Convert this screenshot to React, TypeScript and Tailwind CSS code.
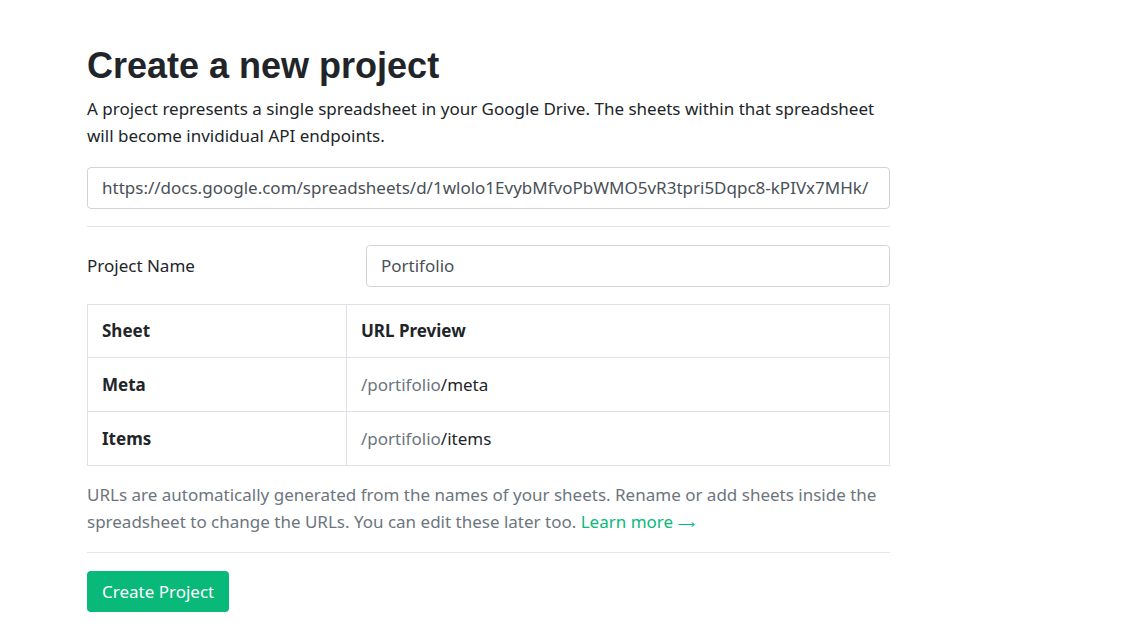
import React from 'react';

const sheets = [
  { name: 'Meta', slug: 'meta' },
  { name: 'Items', slug: 'items' },
];

function App() {
  return (
    <div className="min-h-screen bg-white text-[#212529] font-['Noto_Sans',sans-serif] text-[17px]">
      <div className="ml-[87px] w-[803px] pt-[44px]">
        <h1 className="font-['Liberation_Sans',sans-serif] font-bold text-[36px] leading-[44px] text-[#212529]">
          Create a new project
        </h1>
        <p className="mt-[7px] leading-[27px]">
          A project represents a single spreadsheet in your Google Drive. The sheets within that spreadsheet will
          become invididual API endpoints.
        </p>
        <input
          readOnly
          value="https://docs.google.com/spreadsheets/d/1wlolo1EvybMfvoPbWMO5vR3tpri5Dqpc8-kPIVx7MHk/"
          className="mt-[18px] block w-full h-[42px] px-[14px] pb-[2px] border border-[#ced4da] rounded-[4px] text-[#495057] outline-none"
        />
        <hr className="mt-[17px] border-t border-[#e4e6e9]" />
        <div className="mt-[18px] flex items-center">
          <label className="w-[279px]">Project Name</label>
          <input
            readOnly
            value="Portifolio"
            className="flex-1 h-[42px] px-[14px] pb-[2px] border border-[#ced4da] rounded-[4px] text-[#495057] outline-none"
          />
        </div>
        <table className="mt-[17px] w-full border-collapse border border-[#dee2e6] text-left">
          <thead>
            <tr className="h-[53px]">
              <th className="w-[259px] border border-[#dee2e6] px-[14px] font-bold">Sheet</th>
              <th className="border border-[#dee2e6] px-[14px] font-bold">URL Preview</th>
            </tr>
          </thead>
          <tbody>
            {sheets.map((s) => (
              <tr key={s.slug} className="h-[54px]">
                <td className="border border-[#dee2e6] px-[14px] font-bold">{s.name}</td>
                <td className="border border-[#dee2e6] px-[14px]">
                  <span className="text-[#6c757d]">/portifolio</span>/{s.slug}
                </td>
              </tr>
            ))}
          </tbody>
        </table>
        <p className="mt-[15px] leading-[27px] text-[#6c757d]">
          URLs are automatically generated from the names of your sheets. Rename or add sheets inside the
          spreadsheet to change the URLs. You can edit these later too.{' '}
          <a href="#" className="text-[#09b97a]">
            Learn more <span className="font-['DejaVu_Sans',sans-serif] text-[12px] leading-none">⟶</span>
          </a>
        </p>
        <hr className="mt-[17px] border-t border-[#e4e6e9]" />
        <button className="mt-[18px] h-[41px] px-[15px] rounded-[4px] bg-[#09b97a] text-white">Create Project</button>
      </div>
    </div>
  );
}

export default App;
